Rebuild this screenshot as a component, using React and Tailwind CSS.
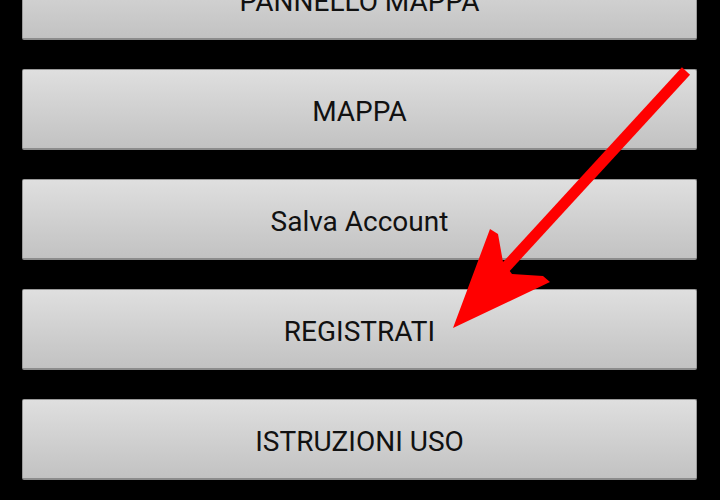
import React from "react";

const labels = ["PANNELLO MAPPA", "MAPPA", "Salva Account", "REGISTRATI", "ISTRUZIONI USO"];

export default function App() {
  return (
    <div className="relative w-[720px] h-[500px] overflow-hidden bg-black" style={{ fontFamily: "Roboto, 'Noto Sans', sans-serif" }}>
      <div className="flex flex-col gap-[29px] pl-[22px] -mt-[41px]">
        {labels.map((l) => (
          <div
            key={l}
            className="w-[675px] h-[81px] shrink-0 flex items-center justify-center rounded-[2px] border border-[#9a9a9a] border-b-[#8c8c8c] border-b-2 bg-gradient-to-b from-[#dfdfdf] to-[#c2c2c2] text-[28px] text-[#111] leading-none pt-[5px]"
          >
            {l}
          </div>
        ))}
      </div>
      <svg className="absolute left-0 top-0" width="720" height="500" viewBox="0 0 720 500">
        <line x1="686" y1="71" x2="505" y2="268" stroke="#ff0000" strokeWidth="11" />
        <polygon points="453,328 490,229 498,234 503,262 512,274 543,276 550,282" fill="#ff0000" />
      </svg>
    </div>
  );
}
